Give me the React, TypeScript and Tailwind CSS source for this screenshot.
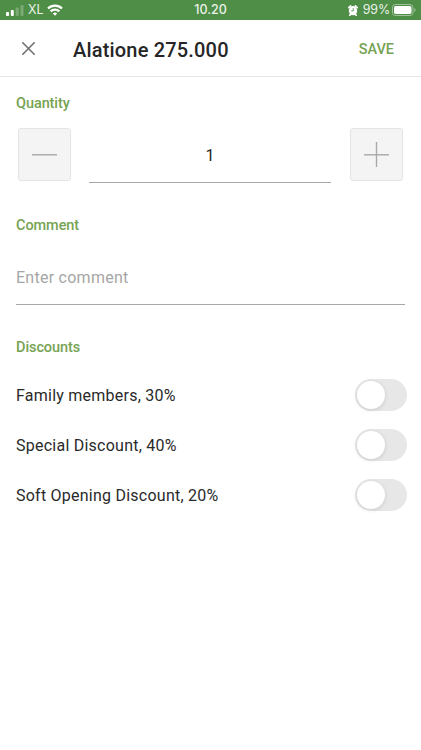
import { useState } from 'react';

const discounts = ['Family members, 30%', 'Special Discount, 40%', 'Soft Opening Discount, 20%'];

function StatusBar() {
  return (
    <div className="grid h-5 grid-cols-3 items-center bg-[#4f8e47] font-['Inter',sans-serif] text-[12.5px] leading-5 text-[#e9f2e8]">
      <div className="flex items-center pl-1.5">
        <svg width="18" height="11" viewBox="0 0 18 11" fill="#fff">
          <rect x="0" y="7" width="3" height="4" rx="0.8" />
          <rect x="4.8" y="5" width="3" height="6" rx="0.8" />
          <rect x="9.7" y="2.5" width="3" height="8.5" rx="0.8" opacity="0.25" />
          <rect x="14.5" y="0" width="3" height="11" rx="0.8" opacity="0.25" />
        </svg>
        <span className="ml-1 w-4">XL</span>
        <svg className="ml-[3px]" width="16" height="12" viewBox="0 0 16 12" fill="none" stroke="#fff" strokeWidth="2.3">
          <path d="M1 4.5a10 10 0 0 1 14 0" />
          <path d="M3.7 7.4a6.1 6.1 0 0 1 8.6 0" />
          <path d="M8 11.8 5.8 9.6a3.1 3.1 0 0 1 4.4 0Z" fill="#fff" stroke="none" />
        </svg>
      </div>
      <span className="text-center font-medium">10.20</span>
      <div className="flex items-center justify-end pr-[5px]">
        <svg width="10" height="11" viewBox="0 0 11 11" preserveAspectRatio="none">
          <path d="M.9 2.6 2.8.9M10.1 2.6 8.2.9M2 10.3l1.2-1.4M9 10.3 7.8 8.9" stroke="#fff" strokeWidth="1.8" strokeLinecap="round" />
          <circle cx="5.5" cy="5.7" r="4.6" fill="#fff" />
          <path d="M5.8 3.2v2.7H3.6" fill="none" stroke="#4f8e47" strokeWidth="0.9" />
        </svg>
        <span className="ml-[5px] tracking-[-0.2px]">99%</span>
        <svg className="ml-0.5" width="24" height="12" viewBox="0 0 24 12">
          <rect x="0.5" y="0.5" width="20.5" height="11" rx="3" fill="none" stroke="#fff" opacity="0.45" />
          <rect x="2" y="2" width="17.5" height="8" rx="1.8" fill="#fff" />
          <path d="M22.3 4v4q1.3-.5 1.3-2t-1.3-2Z" fill="#fff" opacity="0.45" />
        </svg>
      </div>
    </div>
  );
}

function StepButton({ plus, onClick }: { plus?: boolean; onClick: () => void }) {
  return (
    <button
      aria-label={plus ? 'Increase' : 'Decrease'}
      onClick={onClick}
      className="flex size-[53px] items-center justify-center rounded-[3px] border border-[#e4e4e4] bg-[#f4f4f4]"
    >
      <svg width="25" height="25" viewBox="0 0 25 25" stroke="#a9a9a9" strokeWidth="1.4">
        <path d="M0 12.8h25" />
        {plus && <path d="M12.5 0v25" />}
      </svg>
    </button>
  );
}

function SectionTitle({ children }: { children: string }) {
  return (
    <h2 className="text-[14.5px] leading-5 font-medium tracking-[-0.08px] text-[#76a352]">{children}</h2>
  );
}

function DiscountRow({ label }: { label: string }) {
  const [on, setOn] = useState(false);

  return (
    <div className="flex h-[50px] items-center justify-between">
      <span className="pt-0.5 text-[16px] tracking-[0.24px] text-[#2a2a2a]">{label}</span>
      <button
        role="switch"
        aria-checked={on}
        aria-label={label}
        onClick={() => setOn(!on)}
        className={`flex h-8 w-[52px] items-center rounded-full px-[2px] ${on ? 'justify-end bg-[#76a352]' : 'bg-[#e7e7e7]'}`}
      >
        <span className="size-7 rounded-full bg-white shadow-[0_1px_4px_rgba(0,0,0,0.13)]" />
      </button>
    </div>
  );
}

export default function App() {
  const [quantity, setQuantity] = useState(1);

  return (
    <div className="h-[750px] w-full bg-white font-['Roboto',sans-serif] text-[#262626]">
      <StatusBar />
      <header className="flex h-[57px] items-center border-b border-[#e6e6e6] pr-[27px] pl-[22px]">
        <svg className="mt-px" width="13" height="13" viewBox="0 0 13 13" stroke="#707070" strokeWidth="1.6" strokeLinecap="round">
          <path d="m.8.8 11.4 11.4M12.2.8.8 12.2" />
        </svg>
        <h1 className="ml-[38px] flex-1 pt-[3px] text-[20px] font-medium tracking-[0.18px]">Alatione 275.000</h1>
        <button className="pt-[3px] text-[14.5px] font-medium text-[#76a352]">SAVE</button>
      </header>

      <main className="pr-[14px] pl-4 pt-[17px]">
        <SectionTitle>Quantity</SectionTitle>
        <div className="mt-[14px] flex pl-0.5">
          <StepButton onClick={() => setQuantity(Math.max(1, quantity - 1))} />
          <div className="mr-[19px] ml-[18px] flex h-[55px] w-[242px] items-center justify-center border-b border-[#a8a8a8] pt-px text-[16px]">
            {quantity}
          </div>
          <StepButton plus onClick={() => setQuantity(quantity + 1)} />
        </div>

        <div className="mt-[33px]">
          <SectionTitle>Comment</SectionTitle>
          <input
            placeholder="Enter comment"
            className="mt-[14px] block h-[55px] w-[389px] border-b border-[#a8a8a8] text-[16px] tracking-[0.26px] outline-none placeholder:text-[#a6a6a6]"
          />
        </div>

        <div className="mt-[33px]">
          <SectionTitle>Discounts</SectionTitle>
          <div className="mt-3">
            {discounts.map((label) => (
              <DiscountRow key={label} label={label} />
            ))}
          </div>
        </div>
      </main>
    </div>
  );
}
